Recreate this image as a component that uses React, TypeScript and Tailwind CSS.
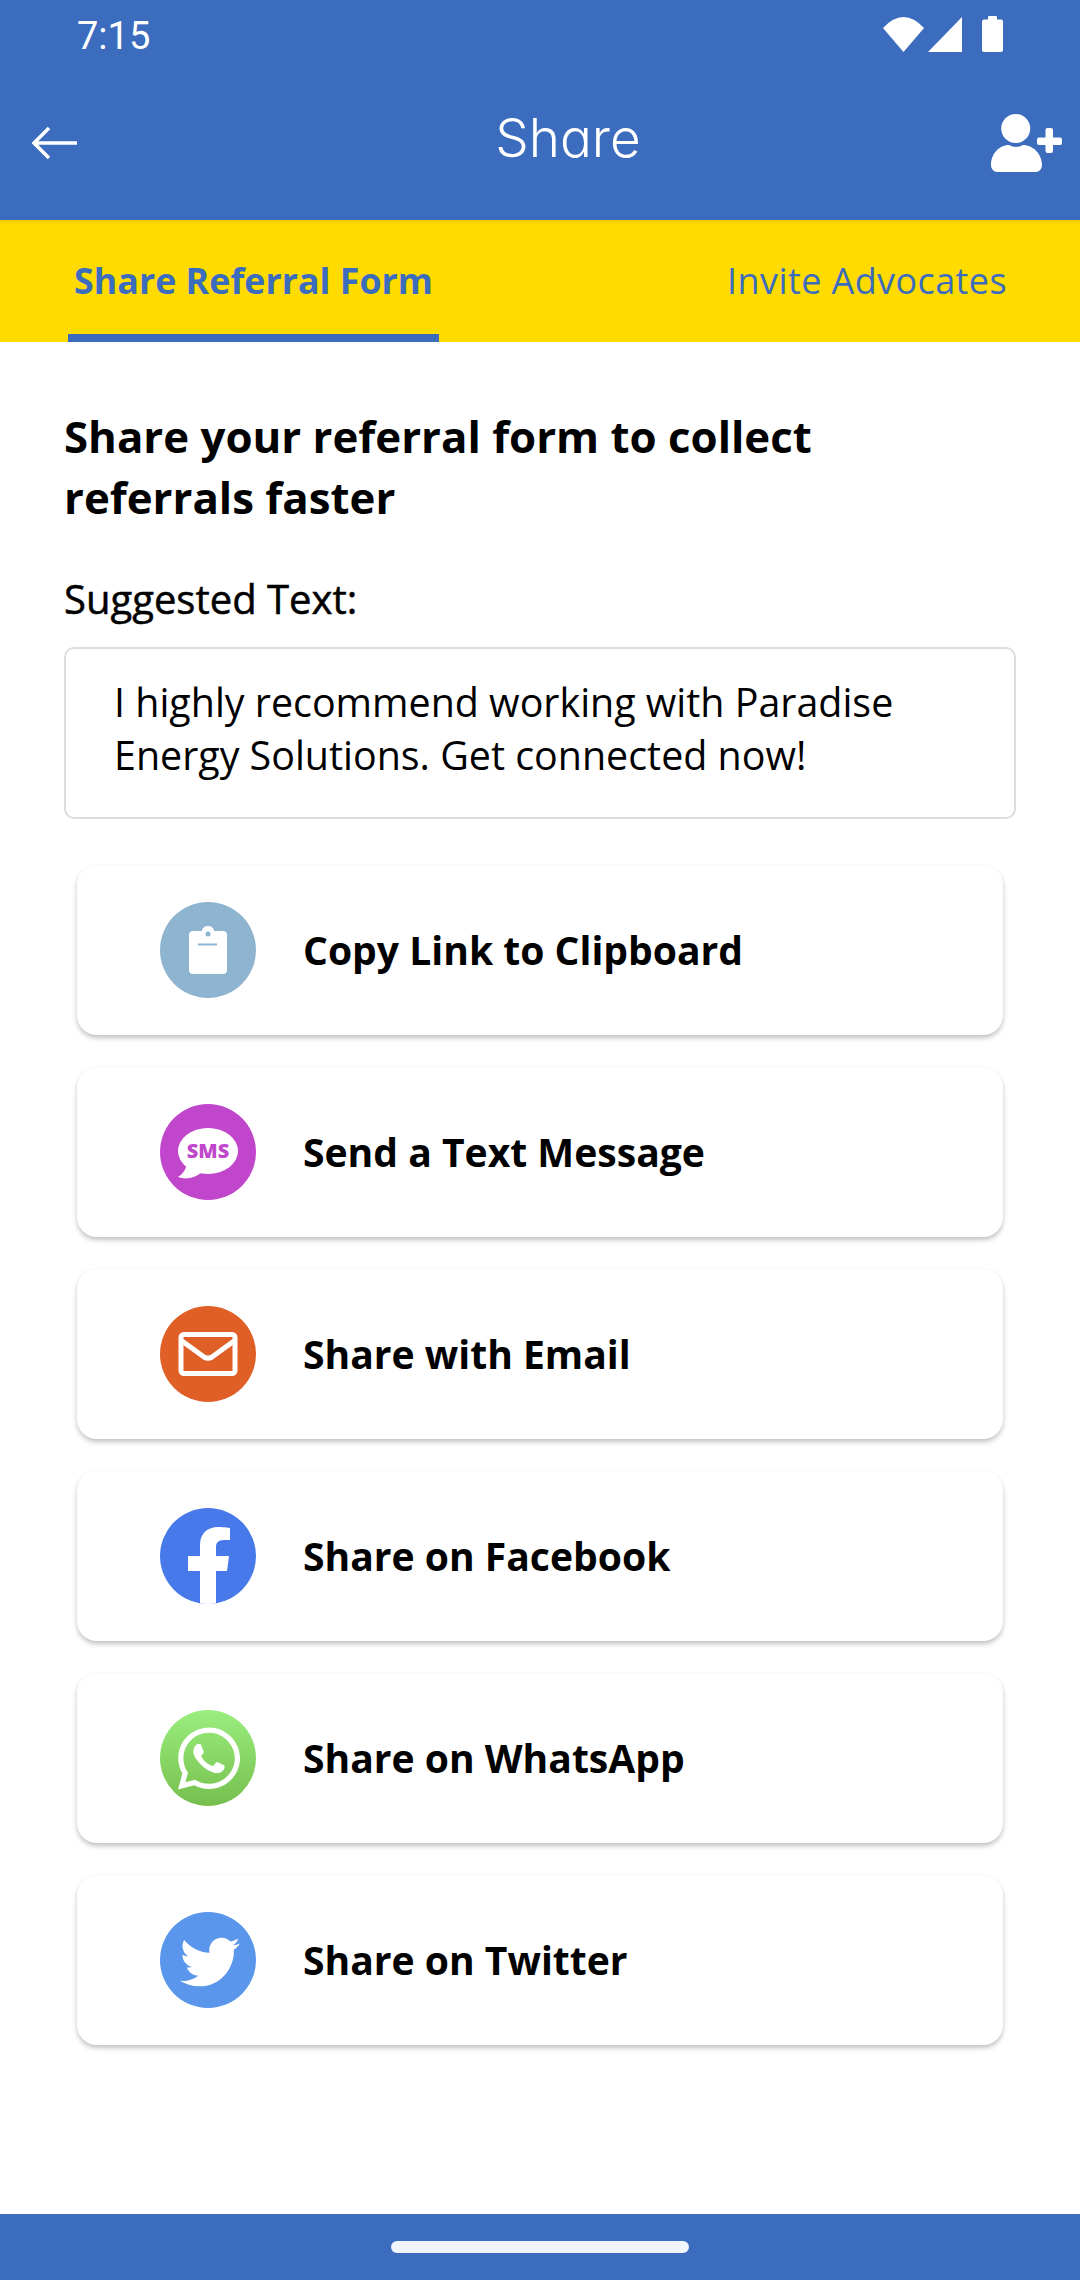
import React from "react";
import { FaWhatsapp, FaTwitter } from "react-icons/fa";

const Row = ({ icon, color, label }: { icon: React.ReactNode; color: string; label: string }) => (
  <div className="flex h-[170px] items-center rounded-[20px] bg-white pl-[83px] shadow-[0_3px_5px_rgba(0,0,0,0.24)]">
    <div className={`flex h-24 w-24 shrink-0 items-center justify-center overflow-hidden rounded-full ${color}`}>{icon}</div>
    <span className="ml-[47px] text-[39.1px] leading-[50px] font-bold text-black">{label}</span>
  </div>
);

export default function App() {
  return (
    <div className="flex h-[2280px] w-[1080px] flex-col overflow-hidden bg-white font-['Open_Sans',sans-serif]">
      <header className="h-[220px] shrink-0 bg-[#3c6cbd] text-white">
        <div className="flex h-[70px] items-center justify-between pr-[77px] pl-[77px]">
          <span className="pt-[2px] font-['Roboto',sans-serif] text-[38px] leading-none">7:15</span>
          <svg width="120" height="38" viewBox="0 0 120 38" fill="white">
            <path d="M0 12Q20.500 -10 41 12L20.500 36z" />
            <path d="M79 1v35H45z" />
            <rect x="99" y="3.500" width="21" height="32.500" rx="2" />
            <rect x="105" y="0" width="9" height="6" rx="1" />
          </svg>
        </div>
        <div className="relative flex h-[150px] items-start justify-between pt-[38px] pr-[17px] pl-[32px]">
          <svg width="46" height="34" viewBox="0 0 46 34" fill="none" stroke="white" strokeWidth="3.500" className="mt-[18px]">
            <path d="M45 17H3M17 2 2 17l15 15" />
          </svg>
          <span className="absolute top-[38px] right-0 left-[56px] text-center font-['Inter',sans-serif] text-[53px] leading-[60px] font-light [font-feature-settings:'cv11']">Share</span>
          <svg width="72" height="58" viewBox="0 0 72 58" fill="white" className="mt-[6px]">
            <circle cx="24.700" cy="14.500" r="14.500" />
            <path d="M0 51c0-11 8-20 18-20 4 2.500 10 2.500 14 0 10 0 19 9 19 20 0 4-3 7-6 7H6c-3 0-6-3-6-7z" />
            <rect x="46" y="23.500" width="25" height="7.500" rx="2" />
            <rect x="54.500" y="14" width="7.500" height="25" rx="2" />
          </svg>
        </div>
      </header>

      <nav className="flex h-[122px] shrink-0 justify-between bg-[#ffdb00] pr-[73px] pl-[68px] shadow-[inset_0_4px_4px_-3px_rgba(0,0,0,0.12)]">
        <div className="flex w-[371px] items-center justify-center border-b-[8px] border-[#3c6cbd] pt-[8px] text-[35.8px] font-bold text-[#3c6cbd]">Share Referral Form</div>
        <div className="flex items-center text-[36px] tracking-[0.4px] text-[#3c6cbd]">Invite Advocates</div>
      </nav>

      <main className="flex-1 px-[64px] pt-[64px]">
        <h1 className="text-[43.8px] leading-[60.500px] font-bold text-black">
          Share your referral form to collect
          <br />
          referrals faster
        </h1>
        <p className="mt-[47px] text-[40px] leading-[50px] font-medium text-black [-webkit-text-stroke:0.5px_#000]">Suggested Text:</p>
        <div className="mt-[23px] h-[172px] w-[952px] rounded-[10px] border-2 border-[#dcdddf] px-[48px] pt-[27px] text-[39.4px] leading-[53px] text-black">
          I highly recommend working with Paradise Energy Solutions. Get connected now!
        </div>
        <div className="mt-[46px] flex flex-col gap-[32px] px-[13px]">
          <Row
            color="bg-[#8fb4cf]"
            label="Copy Link to Clipboard"
            icon={
              <svg width="40" height="48" viewBox="0 0 40 48">
                <path fill="white" d="M5 5h9a6 5 0 0 1 12 0h9a4 4 0 0 1 4 4v35a4 4 0 0 1-4 4H5a4 4 0 0 1-4-4V9a4 4 0 0 1 4-4z" />
                <circle cx="20" cy="8" r="2.500" fill="#8fb4cf" />
                <rect x="10" y="17.500" width="19" height="2" fill="#8fb4cf" />
              </svg>
            }
          />
          <Row
            color="bg-[#c047cb]"
            label="Send a Text Message"
            icon={
              <svg width="96" height="96" viewBox="0 0 96 96">
                <ellipse cx="48" cy="47" rx="30" ry="23" fill="white" />
                <path d="M27 58c0 6-4 12-9 15 8 3 16 1 23-4z" fill="white" />
                <text x="48" y="54" textAnchor="middle" fontFamily="'Open Sans', sans-serif" fontSize="20" fontWeight="800" fill="#c047cb">SMS</text>
              </svg>
            }
          />
          <Row
            color="bg-[#df5f26]"
            label="Share with Email"
            icon={
              <svg width="60" height="44" viewBox="0 0 60 44" fill="none" stroke="white" strokeWidth="5" strokeLinejoin="round">
                <rect x="3" y="2.500" width="54" height="39" rx="3" />
                <path d="M4 9 26 25c2.500 1.500 5.500 1.500 8 0L56 9" />
              </svg>
            }
          />
          <Row
            color="bg-[#4779ea]"
            label="Share on Facebook"
            icon={
              <svg width="96" height="96" viewBox="0 0 96 96">
                <path fill="white" d="M40 96V63H28V48h12V37c0-12 8-18 18-18 6 0 12 1 12 1v12h-6c-6 0-8 3-8 7v9h13l-2 15H56v33z" />
              </svg>
            }
          />
          <Row
            color="bg-gradient-to-b from-[#9bee7e] to-[#76bf4e]"
            label="Share on WhatsApp"
            icon={<FaWhatsapp className="ml-[2px] h-[71px] w-[62px] text-white" />}
          />
          <Row
            color="bg-[#5a96ec]"
            label="Share on Twitter"
            icon={<FaTwitter className="mt-[3px] ml-[3px] h-[60px] w-[60px] text-white" />}
          />
        </div>
      </main>

      <footer className="flex h-[66px] shrink-0 items-center justify-center bg-[#3c6cbd]">
        <div className="h-3 w-[298px] rounded-full bg-[#eff4fd]" />
      </footer>
    </div>
  );
}
